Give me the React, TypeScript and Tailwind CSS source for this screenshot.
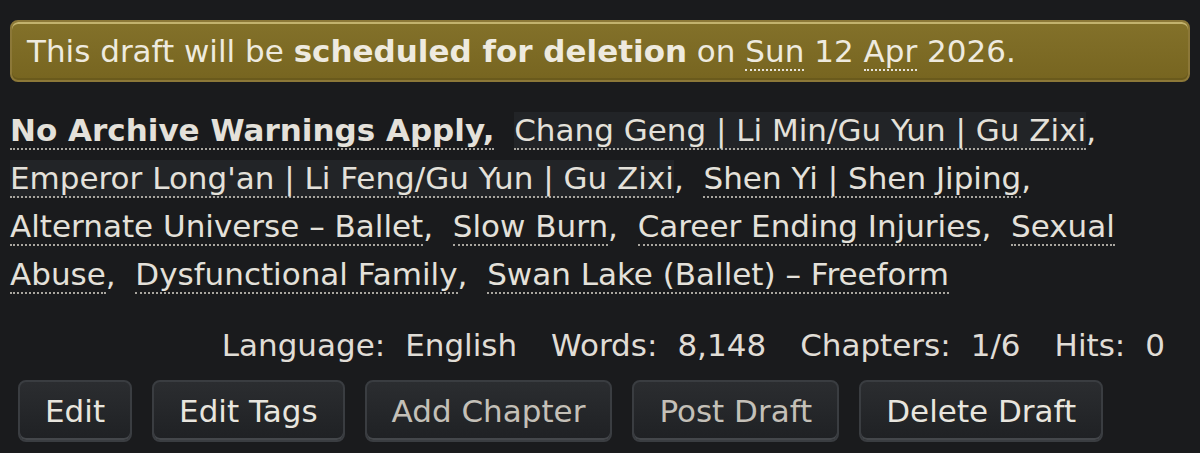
export default function App() {
  const tags = [
    { label: "No Archive Warnings Apply,", bold: true },
    { label: "Chang Geng | Li Min/Gu Yun | Gu Zixi", rel: true },
    { label: "Emperor Long'an | Li Feng/Gu Yun | Gu Zixi", rel: true },
    { label: "Shen Yi | Shen Jiping" },
    { label: "Alternate Universe – Ballet" },
    { label: "Slow Burn" },
    { label: "Career Ending Injuries" },
    { label: "Sexual Abuse" },
    { label: "Dysfunctional Family" },
    { label: "Swan Lake (Ballet) – Freeform" },
  ];

  const buttons = [
    { label: "Edit" },
    { label: "Edit Tags" },
    { label: "Add Chapter", dim: true },
    { label: "Post Draft", dim: true },
    { label: "Delete Draft" },
  ];

  const stats = [
    ["Language:", "English"],
    ["Words:", "8,148"],
    ["Chapters:", "1/6"],
    ["Hits:", "0"],
  ];

  return (
    <div
      className="w-[1200px] h-[453px] overflow-hidden bg-[#1a1b1d] text-[#e4e1da] px-[10px] pt-[20px]"
      style={{ fontFamily: '"DejaVu Sans", "Noto Sans", sans-serif' }}
    >
      {/* Deletion notice */}
      <div className="h-[62px] rounded-[8px] border-2 border-[#8c7838] bg-gradient-to-b from-[#83712a] to-[#776520] shadow-[inset_0_2px_0_#c2b26e,inset_0_-2px_0_#6a5a1c] px-[15px] flex items-center text-[31px] text-[#eeeadf]">
        <p>
          This draft will be <strong>scheduled for deletion</strong> on{" "}
          <span className="border-b-2 border-dotted border-[#e6e3dc]">Sun</span> 12{" "}
          <span className="border-b-2 border-dotted border-[#e6e3dc]">Apr</span> 2026.
        </p>
      </div>

      {/* Tags */}
      <ul className="mt-[24px] text-[31px] leading-[48px]">
        {tags.map((t, i) => (
          <li key={t.label} className="inline">
            <a
              className={`border-b-2 border-dotted border-[#a9a69f] ${t.bold ? "font-bold" : ""} ${
                t.rel ? "bg-[#222427]" : ""
              }`}
            >
              {t.label}
            </a>
            {i < tags.length - 1 && !t.bold ? "," : ""}
            {i < tags.length - 1 ? <span className="whitespace-pre-wrap">{"  "}</span> : null}
          </li>
        ))}
      </ul>

      {/* Stats */}
      <dl className="mt-[23px] flex justify-end gap-[34px] pr-[25px] text-[31px] leading-[48px] text-[#e0ddd6]">
        {stats.map(([k, v]) => (
          <div key={k} className="flex gap-[20px]">
            <dt>{k}</dt>
            <dd>{v}</dd>
          </div>
        ))}
      </dl>

      {/* Actions */}
      <div className="mt-[11px] pl-[8px] flex gap-[20px]">
        {buttons.map((b) => (
          <button
            key={b.label}
            className={`h-[62px] px-[25px] rounded-[8px] border-2 border-[#3a3d41] bg-gradient-to-b from-[#2b2d30] to-[#1f2124] shadow-[inset_0_-2px_0_#44474b] text-[31px] ${
              b.dim ? "text-[#c4c0b8]" : "text-[#e8e5de]"
            }`}
          >
            {b.label}
          </button>
        ))}
      </div>
    </div>
  );
}
